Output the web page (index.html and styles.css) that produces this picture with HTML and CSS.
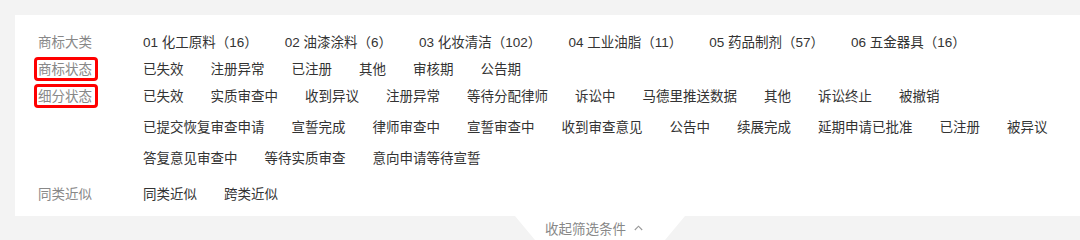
FILE: index.html
```html
<!DOCTYPE html>
<html lang="zh-CN">
<head>
<meta charset="utf-8">
<title>筛选条件</title>
<link rel="stylesheet" href="styles.css">
</head>
<body>
<div class="card">
  <div class="group">
    <div class="label">商标大类</div>
    <div class="items">
      <span>01 化工原料（16）</span>
      <span>02 油漆涂料（6）</span>
      <span>03 化妆清洁（102）</span>
      <span>04 工业油脂（11）</span>
      <span>05 药品制剂（57）</span>
      <span>06 五金器具（16）</span>
    </div>
  </div>
  <div class="group">
    <div class="label"><span class="mark">商标状态</span></div>
    <div class="items">
      <span>已失效</span>
      <span>注册异常</span>
      <span>已注册</span>
      <span>其他</span>
      <span>审核期</span>
      <span>公告期</span>
    </div>
  </div>
  <div class="group">
    <div class="label"><span class="mark">细分状态</span></div>
    <div class="items">
      <span>已失效</span>
      <span>实质审查中</span>
      <span>收到异议</span>
      <span>注册异常</span>
      <span>等待分配律师</span>
      <span>诉讼中</span>
      <span>马德里推送数据</span>
      <span>其他</span>
      <span>诉讼终止</span>
      <span>被撤销</span>
      <span>已提交恢复审查申请</span>
      <span>宣誓完成</span>
      <span>律师审查中</span>
      <span>宣誓审查中</span>
      <span>收到审查意见</span>
      <span>公告中</span>
      <span>续展完成</span>
      <span>延期申请已批准</span>
      <span>已注册</span>
      <span>被异议</span>
      <span>答复意见审查中</span>
      <span>等待实质审查</span>
      <span>意向申请等待宣誓</span>
    </div>
  </div>
  <div class="group sim">
    <div class="label">同类近似</div>
    <div class="items">
      <span>同类近似</span>
      <span>跨类近似</span>
    </div>
  </div>
</div>
<div class="tab">
  <span>收起筛选条件</span>
  <svg class="chev" width="9" height="6" viewBox="0 0 9 6"><polyline points="0.8,5 4.5,1.2 8.2,5" fill="none" stroke="#999" stroke-width="1.1"/></svg>
</div>
</body>
</html>
```
FILE: styles.css
```css
html, body {
  margin: 0;
  padding: 0;
}
body {
  background: #f3f3f3;
  font-family: "Liberation Sans", "Noto Sans CJK SC", sans-serif;
  font-size: 13.5px;
  width: 1080px;
  height: 240px;
  overflow: hidden;
}
.card {
  background: #fff;
  margin: 15px 0 0 15px;
  padding: 13.5px 20px 8.5px 23px;
}
.group {
  display: flex;
  line-height: 27px;
}
.group.sim {
  margin-top: 9px;
}
.label {
  width: 105px;
  flex: none;
  color: #888;
}
.items {
  display: flex;
  flex-wrap: wrap;
  column-gap: 27px;
  row-gap: 4px;
  color: #333;
  flex: 1;
}
.items span {
  white-space: nowrap;
}
.mark {
  position: relative;
  display: inline-block;
}
.mark::after {
  content: "";
  position: absolute;
  left: -4px;
  right: -6px;
  top: 1.5px;
  bottom: 1.5px;
  border: 3px solid #f00;
  border-radius: 4px;
}
.tab {
  margin-left: 515px;
  width: 170px;
  height: 24px;
  box-sizing: border-box;
  background: #fff;
  clip-path: polygon(0 0, 100% 0, calc(100% - 20px) 100%, 20px 100%);
  display: flex;
  align-items: center;
  padding-left: 30px;
  gap: 8px;
  color: #888;
  font-size: 13.5px;
}
.chev {
  display: block;
}
```
